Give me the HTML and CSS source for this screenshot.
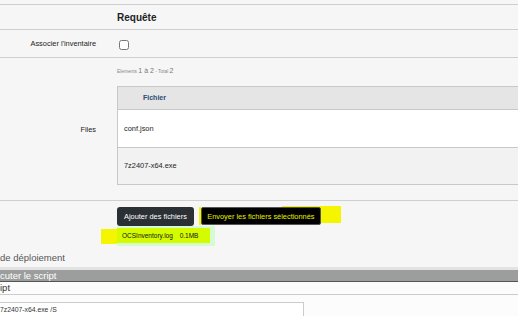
FILE: index.html
```html
<!DOCTYPE html>
<html lang="fr">

<head>
    <meta charset="UTF-8">
    <meta name="viewport" content="width=device-width, initial-scale=1.0">
    <title>Requête</title>
    <link rel="stylesheet" href="styles.css">
</head>

<body>
    <div class="panel">
        <div class="row row-title">
            <div></div>
            <h2>Requête</h2>
        </div>
        <div class="row row-check">
            <label class="lbl" for="assoc">Associer l'inventaire</label>
            <div><input type="checkbox" id="assoc"></div>
        </div>
        <div class="row row-files">
            <div class="lbl">Files</div>
            <div class="files">
                <div class="count">Elements <b>1 à 2</b> - Total <b>2</b></div>
                <div class="tbl">
                    <div class="tbl-head">Fichier</div>
                    <div class="tbl-row">conf.json</div>
                    <div class="tbl-row alt">7z2407-x64.exe</div>
                </div>
            </div>
        </div>
        <div class="row row-upload">
            <div></div>
            <div>
                <div class="actions">
                    <button class="btn">Ajouter des fichiers</button>
                    <span class="send-wrap"><button class="btn btn-send">Envoyer les fichiers sélectionnés</button></span>
                </div>
                <div class="file-item">
                    <span class="mark"></span>
                    <span class="file-box"><span class="file-inner">OCSInventory.log <span class="size">0.1MB</span></span></span>
                </div>
            </div>
        </div>
    </div>

    <div class="deploy">
        <div class="section-title">de déploiement</div>
        <div class="bar">cuter le script</div>
        <div class="sub">ipt</div>
        <div class="cmd">
            <div class="cmd-input">7z2407-x64.exe /S</div>
        </div>
    </div>
</body>

</html>
```

FILE: styles.css
```css
* {
    box-sizing: border-box;
}

body {
    margin: 0;
    width: 518px;
    height: 316px;
    overflow: hidden;
    background: #f6f6f6;
    font-family: "Liberation Sans", Arial, sans-serif;
    font-size: 7.4px;
    color: #222;
}

.panel {
    margin-top: 4px;
    border-top: 1px solid #cfcfcf;
}

.row {
    display: grid;
    grid-template-columns: 96px 1fr;
    column-gap: 21px;
    align-items: center;
    border-bottom: 1px solid #cfcfcf;
}

.lbl {
    text-align: right;
}

.row-title {
    height: 25px;
}

.row-title h2 {
    margin: 0;
    font-size: 10px;
    font-weight: bold;
    color: #222;
}

.row-check {
    height: 28px;
}

.row-check input {
    width: 10px;
    height: 10px;
    margin: 3px 0 0 2px;
    display: block;
}

.files {
    min-width: 0;
    padding: 8px 0 15px;
}

.count {
    height: 10px;
    line-height: 10px;
    margin-bottom: 10px;
    font-size: 4.8px;
    color: #888;
}

.count b {
    font-weight: normal;
    font-size: 7px;
    color: #777;
}

.tbl {
    width: 100%;
    border: 1px solid #c8c8c8;
    border-right: none;
}

.tbl-head {
    height: 23px;
    line-height: 22px;
    padding-left: 25px;
    background: #e5e5e5;
    border-bottom: 1px solid #c8c8c8;
    font-weight: bold;
    font-size: 7px;
    color: #2a4a73;
}

.tbl-row {
    height: 38px;
    line-height: 37px;
    padding-left: 6px;
    background: #fff;
    border-bottom: 1px solid #c8c8c8;
}

.tbl-row.alt {
    height: 36px;
    line-height: 36px;
    background: #f2f2f2;
    border-bottom: none;
}

.row-upload {
    align-items: start;
    padding-top: 6px;
    border-bottom: none;
}

.actions {
    display: flex;
    align-items: flex-start;
    gap: 5px;
}

.btn {
    height: 19px;
    padding: 0 7px;
    border: none;
    border-radius: 3px;
    background: #2b3035;
    color: #fff;
    font-family: inherit;
    font-size: 7.4px;
}

.send-wrap {
    position: relative;
    z-index: 0;
    display: flex;
    border-left: 2px solid #f5f500;
}

.send-wrap::before {
    content: "";
    position: absolute;
    z-index: -1;
    left: 81px;
    top: -1px;
    width: 59px;
    height: 17px;
    background: #f5f500;
}

.btn-send {
    width: 120px;
    height: 18px;
    padding: 0;
    border: 1px solid #555;
    border-radius: 2px;
    background: #000;
    color: #e8f000;
}

.file-item {
    display: flex;
    align-items: center;
    margin-left: -16px;
}

.mark {
    width: 16px;
    height: 15px;
    background: #f5f500;
}

.file-box {
    display: block;
    padding: 2px 5px 3px 0;
    background: #d6fbd2;
}

.file-inner {
    display: block;
    width: 93px;
    height: 15px;
    line-height: 15px;
    padding-left: 5px;
    background: #d4fb00;
    font-size: 6.5px;
    color: #111;
}

.size {
    margin-left: 5px;
}

.section-title {
    height: 21px;
    padding-top: 5px;
    line-height: 14px;
    font-size: 9.5px;
    color: #555;
}

.bar {
    height: 15px;
    line-height: 11px;
    border-top: 3px solid #e3e3e3;
    border-bottom: 1px solid #555;
    background: #9b9e9c;
    color: #fff;
    font-size: 9.5px;
}

.sub {
    height: 13px;
    line-height: 12px;
    background: #fcfcfc;
    border-bottom: 1px solid #ccc;
    font-size: 9.5px;
    color: #333;
}

.cmd {
    height: 21px;
    padding-top: 7px;
    background: #fcfcfc;
}

.cmd-input {
    width: 304px;
    height: 14px;
    padding-top: 3px;
    border: 1px solid #ccc;
    border-left: none;
    border-bottom: none;
    background: #fff;
    font-size: 6.8px;
    color: #333;
}
```
